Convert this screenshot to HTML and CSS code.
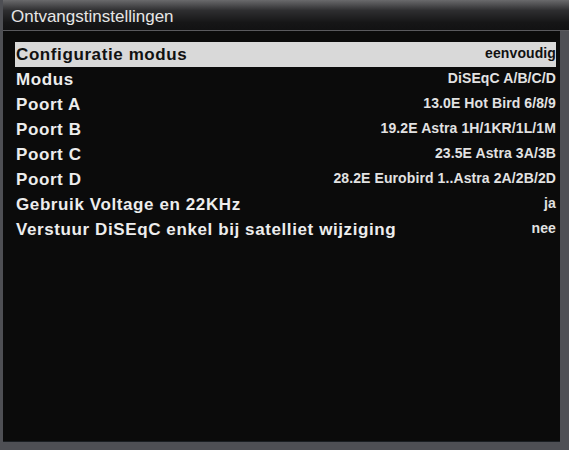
FILE: index.html
```html
<!DOCTYPE html>
<html>
<head>
    <title>Ontvangstinstellingen</title>
    <link rel="stylesheet" href="styles.css">
</head>
<body>
    <div class="window">
        <div class="title-bar">Ontvangstinstellingen</div>
        <div class="content">
            <ul class="settings">
                <li class="row selected"><span class="label">Configuratie modus</span><span class="value">eenvoudig</span></li>
                <li class="row"><span class="label">Modus</span><span class="value">DiSEqC A/B/C/D</span></li>
                <li class="row"><span class="label">Poort A</span><span class="value">13.0E Hot Bird 6/8/9</span></li>
                <li class="row"><span class="label">Poort B</span><span class="value">19.2E Astra 1H/1KR/1L/1M</span></li>
                <li class="row"><span class="label">Poort C</span><span class="value">23.5E Astra 3A/3B</span></li>
                <li class="row"><span class="label">Poort D</span><span class="value">28.2E Eurobird 1..Astra 2A/2B/2D</span></li>
                <li class="row"><span class="label">Gebruik Voltage en 22KHz</span><span class="value">ja</span></li>
                <li class="row"><span class="label">Verstuur DiSEqC enkel bij satelliet wijziging</span><span class="value">nee</span></li>
            </ul>
        </div>
    </div>
</body>
</html>
```

FILE: styles.css
```css
html, body {
    margin: 0;
    padding: 0;
    background-color: #ffffff;
}
body {
    font-family: "Liberation Sans", Arial, sans-serif;
}
.window {
    width: 569px;
    height: 450px;
    box-sizing: border-box;
    background-color: #4e4f54;
    padding: 0 9px 8px 3px;
    display: flex;
    flex-direction: column;
}
.title-bar {
    height: 31px;
    margin-right: -9px;
    padding: 3px 0 0 8px;
    box-sizing: border-box;
    border-bottom: 1px solid #5a5a5e;
    background: linear-gradient(to bottom, #6a6a6c 0%, #2e2e30 35%, #161617 75%, #121213 100%);
    color: #e6e6e6;
    font-size: 17px;
    line-height: 28px;
}
.content {
    flex: 1;
    background-color: #0b0b0b;
    padding: 11px 4px 0 12px;
    border-bottom: 1px solid #1a1e22;
}
.settings {
    list-style: none;
    margin: 0;
    padding: 0;
}
.row {
    height: 25px;
    display: flex;
    justify-content: space-between;
    align-items: flex-start;
    color: #ededed;
    font-weight: bold;
}
.row.selected {
    background-color: #d9d9d9;
    color: #111111;
}
.label {
    font-size: 17px;
    line-height: 25px;
    letter-spacing: 0.6px;
    padding-left: 1px;
}
.value {
    font-size: 14px;
    line-height: 23px;
    letter-spacing: 0.1px;
    color: inherit;
}
.row:not(.selected) .value {
    color: #e2e2e2;
}
```
